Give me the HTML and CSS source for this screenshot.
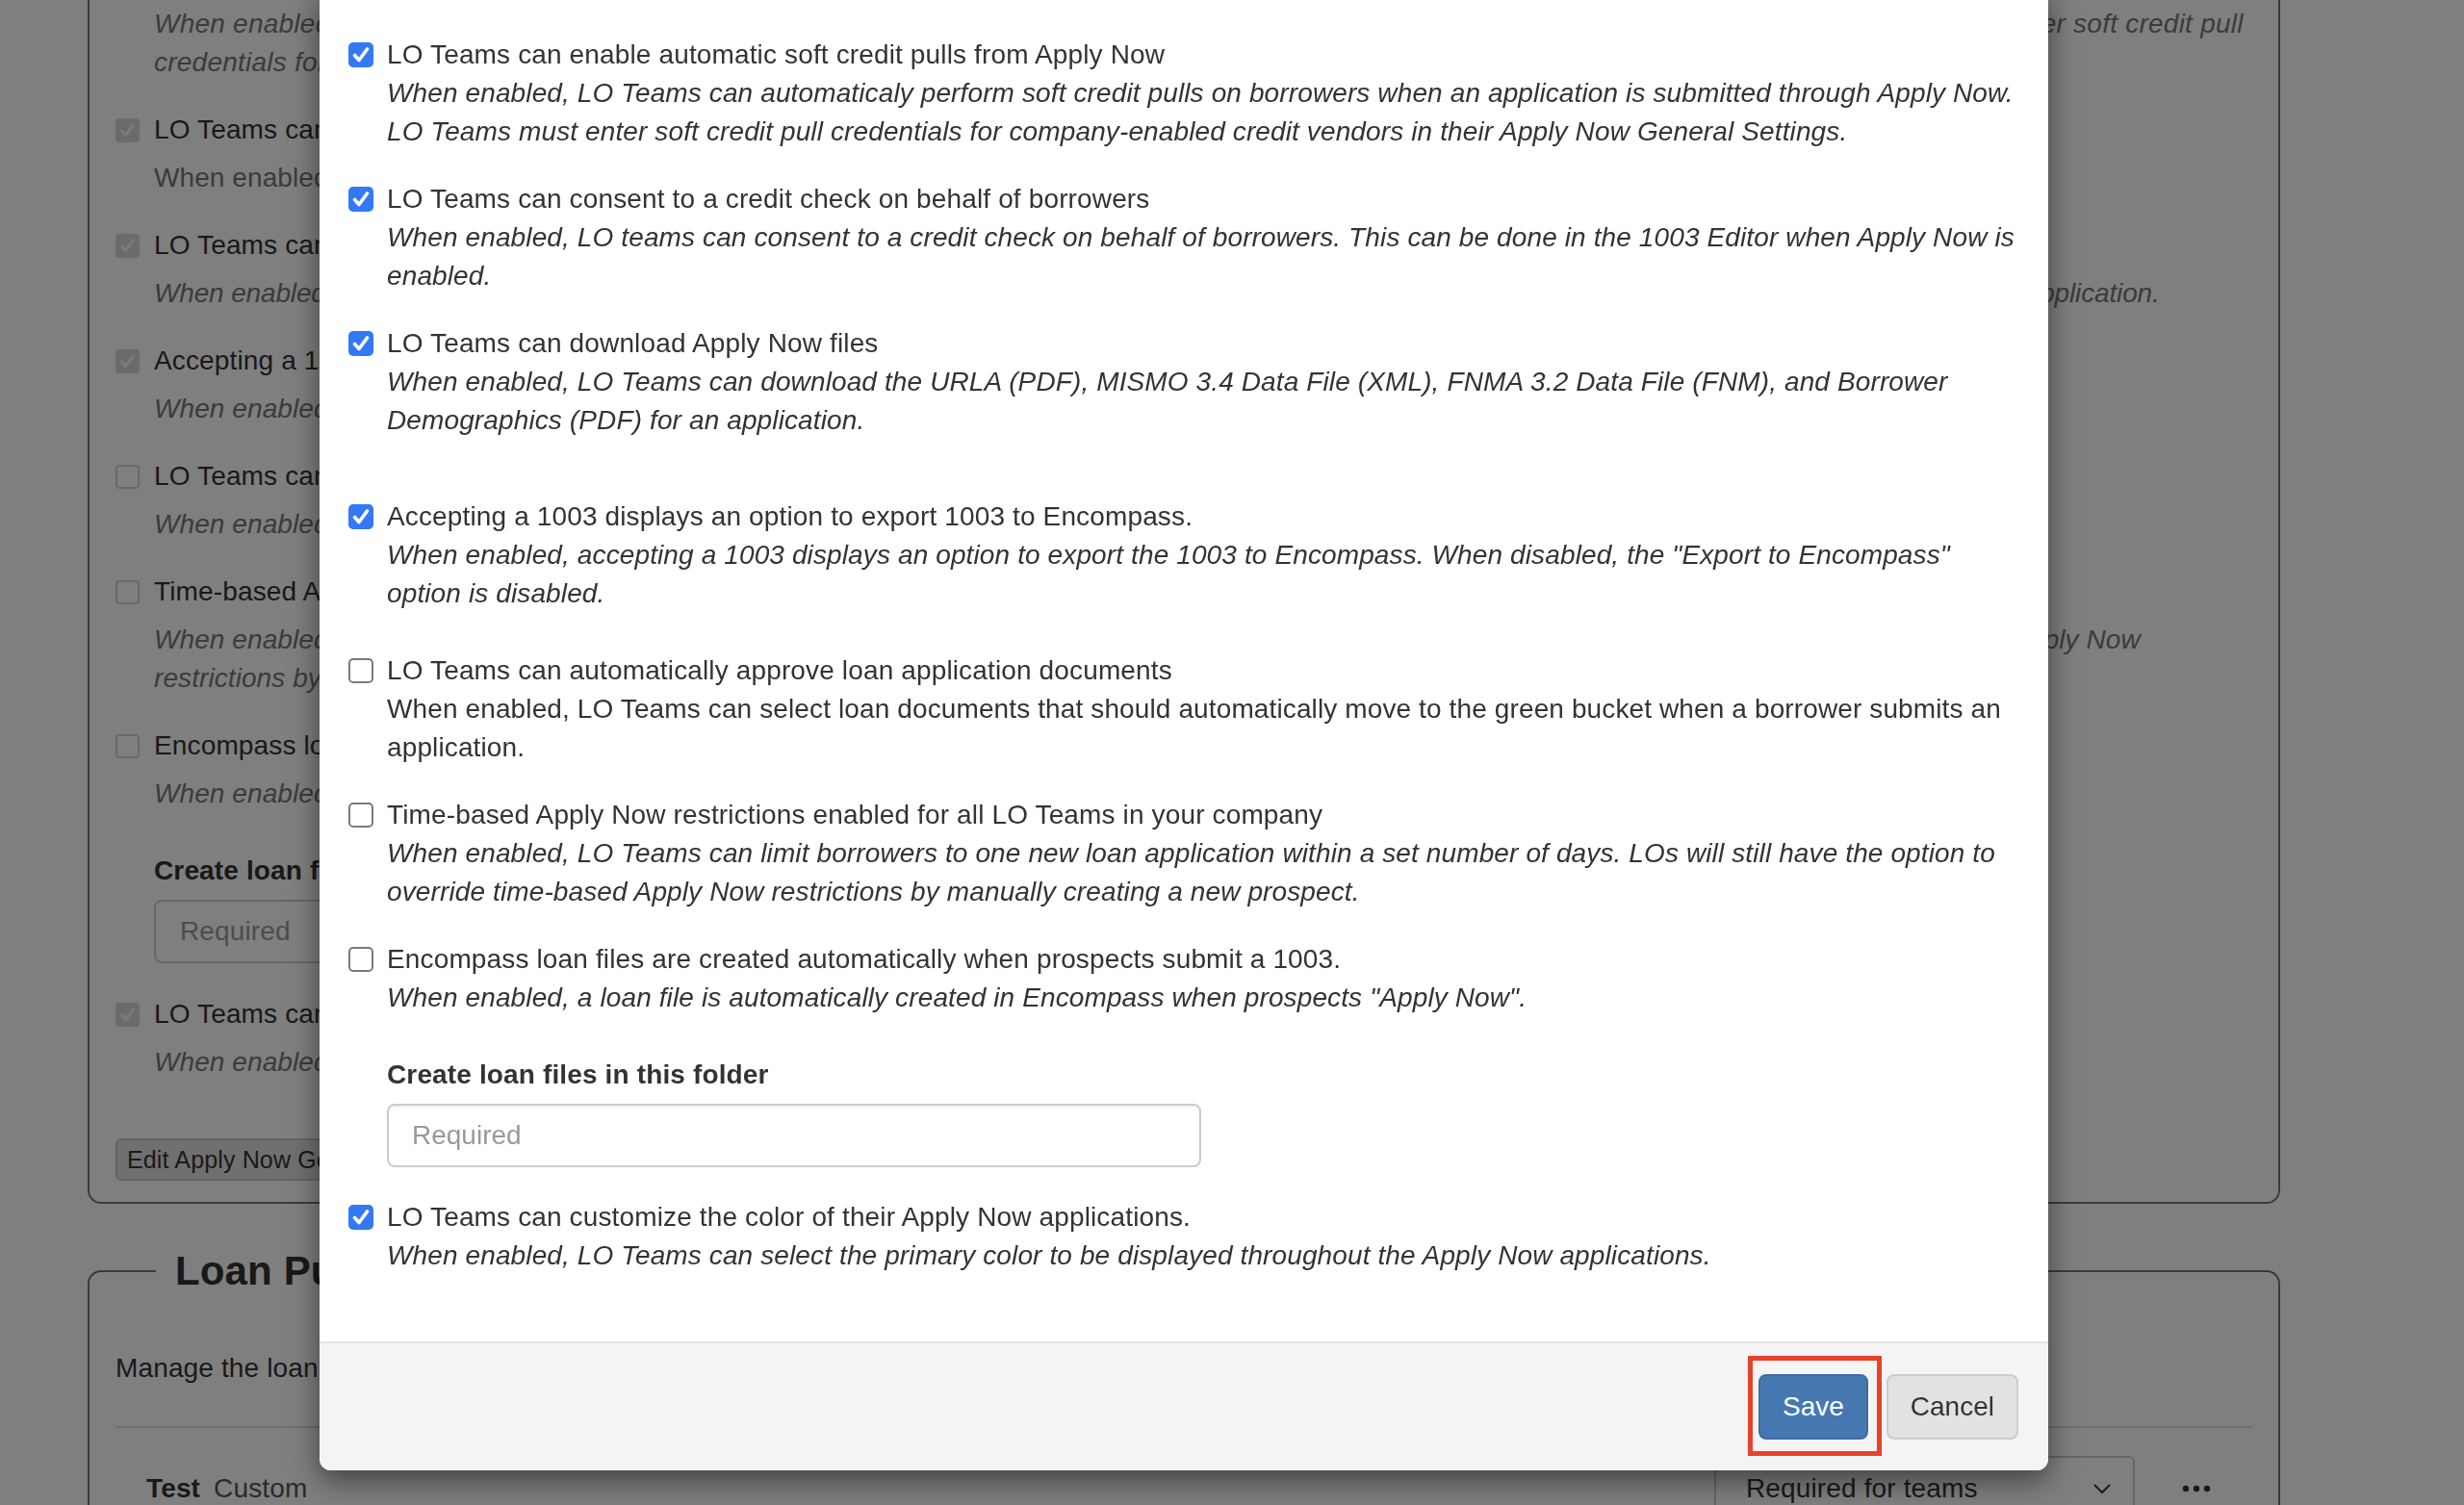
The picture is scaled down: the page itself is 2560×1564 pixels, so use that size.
FILE: index.html
```html
<!DOCTYPE html>
<html lang="en">
<head>
<meta charset="utf-8">
<title>Apply Now Settings</title>
<link rel="stylesheet" href="styles.css">
</head>
<body>
<div class="page">
  <div class="panel panel-top">
    <div class="bg-item">
      <span class="bg-cb on"><svg viewBox="0 0 25 25"><path d="M6.5 13 L10.5 17.5 L18.5 7"/></svg></span>
      <div class="bg-text">
        <div class="bg-label">LO Teams can enable automatic soft credit pulls from Apply Now</div>
        <div class="bg-desc it wide">When enabled, LO Teams can automaticaly perform soft credit pulls on borrowers when an application is submitted through Apply Now. LO Teams must enter soft credit pull<br>credentials for company-enabled credit vendors in their Apply Now General Settings.</div>
      </div>
    </div>
    <div class="bg-item">
      <span class="bg-cb on"><svg viewBox="0 0 25 25"><path d="M6.5 13 L10.5 17.5 L18.5 7"/></svg></span>
      <div class="bg-text">
        <div class="bg-label">LO Teams can consent to a credit check on behalf of borrowers</div>
        <div class="bg-desc">When enabled, LO teams can consent to a credit check on behalf of borrowers. This can be done in the 1003 Editor when Apply Now is enabled.</div>
      </div>
    </div>
    <div class="bg-item">
      <span class="bg-cb on"><svg viewBox="0 0 25 25"><path d="M6.5 13 L10.5 17.5 L18.5 7"/></svg></span>
      <div class="bg-text">
        <div class="bg-label">LO Teams can download Apply Now files</div>
        <div class="bg-desc it narrow">When enabled, LO Teams can download the URLA (PDF), MISMO 3.4 Data File (XML), FNMA 3.2 Data File (FNM), and Borrower Demographics (PDF) for an application.</div>
      </div>
    </div>
    <div class="bg-item">
      <span class="bg-cb on"><svg viewBox="0 0 25 25"><path d="M6.5 13 L10.5 17.5 L18.5 7"/></svg></span>
      <div class="bg-text">
        <div class="bg-label">Accepting a 1003 displays an option to export 1003 to Encompass.</div>
        <div class="bg-desc it">When enabled, accepting a 1003 displays an option to export the 1003 to Encompass. When disabled, the "Export to Encompass" option is disabled.</div>
      </div>
    </div>
    <div class="bg-item">
      <span class="bg-cb off"></span>
      <div class="bg-text">
        <div class="bg-label">LO Teams can automatically approve loan application documents</div>
        <div class="bg-desc it">When enabled, LO Teams can select loan documents that should automatically move to the green bucket when a borrower submits an application.</div>
      </div>
    </div>
    <div class="bg-item">
      <span class="bg-cb off"></span>
      <div class="bg-text">
        <div class="bg-label">Time-based Apply Now restrictions enabled for all LO Teams in your company</div>
        <div class="bg-desc it">When enabled, LO Teams can limit borrowers to one new loan application within a set number of days. LOs will still have the option to override time-based Apply Now<br>restrictions by manually creating a new prospect.</div>
      </div>
    </div>
    <div class="bg-item">
      <span class="bg-cb off"></span>
      <div class="bg-text">
        <div class="bg-label">Encompass loan files are created automatically when prospects submit a 1003.</div>
        <div class="bg-desc it">When enabled, a loan file is automatically created in Encompass when prospects "Apply Now".</div>
      </div>
    </div>
    <div class="bg-folder">
      <div class="bg-folder-label">Create loan files in this folder</div>
      <div class="bg-input">Required</div>
    </div>
    <div class="bg-item bg-item-last">
      <span class="bg-cb on"><svg viewBox="0 0 25 25"><path d="M6.5 13 L10.5 17.5 L18.5 7"/></svg></span>
      <div class="bg-text">
        <div class="bg-label">LO Teams can customize the color of their Apply Now applications.</div>
        <div class="bg-desc it">When enabled, LO Teams can select the primary color to be displayed throughout the Apply Now applications.</div>
      </div>
    </div>
    <div class="bg-actions"><span class="bg-btn">Edit Apply Now General Settings</span></div>
  </div>

  <fieldset class="panel-set">
    <legend class="panel-legend">Loan Purposes</legend>
    <p class="panel-intro">Manage the loan purposes that are available to your LO Teams in Apply Now.</p>
    <div class="lp-table">
      <div class="lp-row">
        <div class="lp-name"><strong>Test</strong><span class="lp-type">Custom</span></div>
        <div class="lp-select">
          <span>Required for teams</span>
          <svg class="chev" viewBox="0 0 20 12"><polyline points="2,2 10,10 18,2"/></svg>
        </div>
        <div class="lp-more"><svg viewBox="0 0 30 8"><circle cx="4" cy="4" r="3.2"/><circle cx="15" cy="4" r="3.2"/><circle cx="26" cy="4" r="3.2"/></svg></div>
      </div>
    </div>
  </fieldset>
</div>

<div class="backdrop"></div>

<div class="modal">
  <div class="modal-body">
    <div class="opt">
      <span class="cb on"><svg viewBox="0 0 26 26"><path d="M6.5 13.5 L11 18.5 L19.5 7"/></svg></span>
      <div class="txt">
        <div>LO Teams can enable automatic soft credit pulls from Apply Now</div>
        <div class="desc">When enabled, LO Teams can automaticaly perform soft credit pulls on borrowers when an application is submitted through Apply Now.<br>LO Teams must enter soft credit pull credentials for company-enabled credit vendors in their Apply Now General Settings.</div>
      </div>
    </div>
    <div class="opt g30">
      <span class="cb on"><svg viewBox="0 0 26 26"><path d="M6.5 13.5 L11 18.5 L19.5 7"/></svg></span>
      <div class="txt">
        <div>LO Teams can consent to a credit check on behalf of borrowers</div>
        <div class="desc">When enabled, LO teams can consent to a credit check on behalf of borrowers. This can be done in the 1003 Editor when Apply Now is<br>enabled.</div>
      </div>
    </div>
    <div class="opt g30">
      <span class="cb on"><svg viewBox="0 0 26 26"><path d="M6.5 13.5 L11 18.5 L19.5 7"/></svg></span>
      <div class="txt">
        <div>LO Teams can download Apply Now files</div>
        <div class="desc">When enabled, LO Teams can download the URLA (PDF), MISMO 3.4 Data File (XML), FNMA 3.2 Data File (FNM), and Borrower<br>Demographics (PDF) for an application.</div>
      </div>
    </div>
    <div class="opt g60">
      <span class="cb on"><svg viewBox="0 0 26 26"><path d="M6.5 13.5 L11 18.5 L19.5 7"/></svg></span>
      <div class="txt">
        <div>Accepting a 1003 displays an option to export 1003 to Encompass.</div>
        <div class="desc">When enabled, accepting a 1003 displays an option to export the 1003 to Encompass. When disabled, the "Export to Encompass"<br>option is disabled.</div>
      </div>
    </div>
    <div class="opt g40">
      <span class="cb off"></span>
      <div class="txt">
        <div>LO Teams can automatically approve loan application documents</div>
        <div class="desc upright">When enabled, LO Teams can select loan documents that should automatically move to the green bucket when a borrower submits an<br>application.</div>
      </div>
    </div>
    <div class="opt g30">
      <span class="cb off"></span>
      <div class="txt">
        <div>Time-based Apply Now restrictions enabled for all LO Teams in your company</div>
        <div class="desc">When enabled, LO Teams can limit borrowers to one new loan application within a set number of days. LOs will still have the option to<br>override time-based Apply Now restrictions by manually creating a new prospect.</div>
      </div>
    </div>
    <div class="opt g30">
      <span class="cb off"></span>
      <div class="txt">
        <div>Encompass loan files are created automatically when prospects submit a 1003.</div>
        <div class="desc">When enabled, a loan file is automatically created in Encompass when prospects "Apply Now".</div>
      </div>
    </div>
    <div class="folder">
      <label class="folder-label" for="folder">Create loan files in this folder</label>
      <input class="folder-input" id="folder" type="text" placeholder="Required">
    </div>
    <div class="opt g32">
      <span class="cb on"><svg viewBox="0 0 26 26"><path d="M6.5 13.5 L11 18.5 L19.5 7"/></svg></span>
      <div class="txt">
        <div>LO Teams can customize the color of their Apply Now applications.</div>
        <div class="desc">When enabled, LO Teams can select the primary color to be displayed throughout the Apply Now applications.</div>
      </div>
    </div>
  </div>
  <div class="modal-footer">
    <span class="highlight"><button class="btn btn-primary" type="button">Save</button></span>
    <button class="btn btn-default" type="button">Cancel</button>
  </div>
</div>
</body>
</html>
```

FILE: styles.css
```css
html, body {
  margin: 0;
  padding: 0;
}
body {
  font-family: "Liberation Sans", Arial, sans-serif;
  font-size: 28px;
  line-height: 40px;
  letter-spacing: 0.14px;
  color: #333;
  background: #fff;
  overflow: hidden;
  height: 1564px;
}

/* ---------- background page ---------- */
.page {
  display: flow-root;
  padding: 0 191px 0 91px;
}
.panel {
  border: 2px solid #777;
  border-radius: 14px;
}
.panel-top {
  margin-top: -80px;
  padding: 33px 37px 22px 27px;
  display: flex;
  flex-direction: column;
  gap: 30px;
}
.bg-item {
  display: flex;
  align-items: flex-start;
}
.bg-cb {
  flex: none;
  width: 25px;
  height: 25px;
  margin: 8px 15px 0 0;
  border-radius: 4px;
  box-sizing: border-box;
}
.bg-cb svg {
  display: block;
  width: 25px;
  height: 25px;
}
.bg-cb path {
  fill: none;
  stroke: #f4f4f4;
  stroke-width: 3.2;
  stroke-linecap: round;
  stroke-linejoin: round;
}
.bg-cb.on { background: #d6d6d6; }
.bg-cb.off { border: 2px solid #d2d2d2; background: #fff; }
.bg-text { flex: 1; min-width: 0; }
.bg-label { white-space: nowrap; }
.bg-desc {
  margin-top: 10px;
  color: #777;
  white-space: nowrap;
  letter-spacing: 0.08px;
}
.bg-desc.wide { letter-spacing: 0.24px; }
.bg-desc.narrow { letter-spacing: -0.15px; }
.it { font-style: italic; }
.bg-folder {
  margin: 10px 0 0 40px;
}
.bg-folder-label { font-weight: bold; }
.bg-input {
  margin-top: 10px;
  width: 846px;
  height: 66px;
  box-sizing: border-box;
  border: 2px solid #ccc;
  border-radius: 8px;
  padding: 0 25px;
  line-height: 62px;
  color: #999;
}
.bg-item-last { margin-top: 3px; }
.bg-actions { margin-top: 29px; }
.bg-btn {
  display: inline-block;
  height: 44px;
  line-height: 40px;
  box-sizing: border-box;
  padding: 0 10px;
  font-size: 25px;
  background: #e0e0e0;
  border: 2px solid #c8c8c8;
  border-radius: 6px;
  white-space: nowrap;
}

.panel-set {
  margin: 47px 0 0;
  padding: 0 27px 40px;
  border: 2px solid #777;
  border-radius: 14px;
  min-width: 0;
}
.panel-legend {
  margin-left: 42px;
  padding: 0 20px;
  font-size: 42px;
  line-height: 46px;
  font-weight: bold;
  color: #333;
}
.panel-intro {
  margin: 58px 0 0;
  line-height: 40px;
  white-space: nowrap;
}
.lp-table {
  margin-top: 40px;
  border-top: 2px solid #ddd;
}
.lp-row {
  display: flex;
  align-items: center;
  padding: 29px 0 20px 32px;
}
.lp-name {
  flex: 1;
  display: flex;
  gap: 14px;
}
.lp-type { color: #555; }
.lp-select {
  width: 437px;
  height: 68px;
  box-sizing: border-box;
  border: 2px solid #ccc;
  border-radius: 6px;
  padding: 0 22px 0 31px;
  display: flex;
  align-items: center;
  justify-content: space-between;
}
.chev {
  width: 20px;
  height: 12px;
}
.chev polyline {
  fill: none;
  stroke: #333;
  stroke-width: 2;
}
.lp-more {
  width: 122px;
  display: flex;
  justify-content: center;
  padding-left: 6px;
  box-sizing: border-box;
}
.lp-more svg {
  width: 30px;
  height: 8px;
  fill: #333;
}

/* ---------- overlay ---------- */
.backdrop {
  position: fixed;
  inset: 0;
  background: rgba(0, 0, 0, 0.5);
}

/* ---------- modal ---------- */
.modal {
  position: absolute;
  left: 332px;
  top: -13px;
  width: 1796px;
  background: #fff;
  border-radius: 12px;
  box-shadow: 0 10px 30px rgba(0, 0, 0, 0.5);
  overflow: hidden;
}
.modal-body {
  padding: 50px 30px 69px;
  display: flex;
  flex-direction: column;
}
.opt {
  display: flex;
  align-items: flex-start;
}
.g30 { margin-top: 30px; }
.g32 { margin-top: 32px; }
.g40 { margin-top: 40px; }
.g60 { margin-top: 60px; }
.cb {
  flex: none;
  width: 26px;
  height: 26px;
  margin: 7px 14px 0 0;
  border-radius: 5px;
  box-sizing: border-box;
}
.cb svg {
  display: block;
  width: 26px;
  height: 26px;
}
.cb path {
  fill: none;
  stroke: #fff;
  stroke-width: 3.6;
  stroke-linecap: round;
  stroke-linejoin: round;
}
.cb.on { background: #3478f6; }
.cb.off {
  background: #fff;
  border: 2px solid #7a7a7a;
}
.txt {
  flex: 1;
  min-width: 0;
}
.desc { font-style: italic; letter-spacing: 0.12px; }
.desc.upright { font-style: normal; }

.folder {
  margin: 40px 0 0 40px;
  display: flex;
  flex-direction: column;
  align-items: flex-start;
}
.folder-label {
  font-weight: bold;
  line-height: 40px;
}
.folder-input {
  margin-top: 10px;
  width: 846px;
  height: 66px;
  box-sizing: border-box;
  border: 2px solid #ccc;
  border-radius: 8px;
  padding: 0 24px;
  font-family: inherit;
  font-size: 28px;
  color: #333;
  box-shadow: inset 0 2px 2px rgba(0, 0, 0, 0.06);
  outline: none;
}
.folder-input::placeholder { color: #999; }

.modal-footer {
  border-top: 2px solid #e5e5e5;
  background: #f4f4f4;
  padding: 32px 31px;
  display: flex;
  justify-content: flex-end;
  align-items: center;
  gap: 19px;
}
.btn {
  height: 68px;
  box-sizing: border-box;
  padding: 0 23px;
  font-family: inherit;
  font-size: 28px;
  line-height: 64px;
  border-radius: 8px;
  border: 2px solid;
  cursor: pointer;
}
.btn-primary {
  background: #4578b1;
  border-color: #3e6da3;
  color: #fff;
}
.btn-default {
  background: #e2e2e2;
  border-color: #cdcdcd;
  color: #333;
}
.highlight {
  position: relative;
  display: inline-flex;
}
.highlight::after {
  content: "";
  position: absolute;
  top: -19px;
  right: -14px;
  bottom: -17px;
  left: -11px;
  border: 5px solid #e8412c;
  pointer-events: none;
}
```
